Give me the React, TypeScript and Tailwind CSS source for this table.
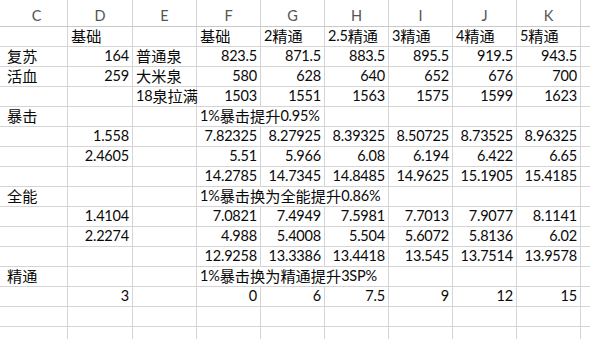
import React from "react";

type Cell = { t?: string; a?: "l" | "r"; span?: number };

const colW = [68, 65, 64, 64, 64, 64, 64, 64, 64, 9];

const wClass: Record<number, string> = {
  68: "w-[68px]",
  65: "w-[65px]",
  64: "w-[64px]",
  128: "w-[128px]",
  192: "w-[192px]",
  9: "w-[9px]",
};

const L = (t: string, span = 1): Cell => ({ t, a: "l", span });
const R = (t: string): Cell => ({ t, a: "r" });
const E: Cell = {};

const nums = (arr: string[]) => arr.map((x) => R(x));

const rows: Cell[][] = [
  [E, L("基础"), E, L("基础"), L("2精通"), L("2.5精通"), L("3精通"), L("4精通"), L("5精通"), E],
  [L("复苏"), R("164"), L("普通泉"), ...nums(["823.5", "871.5", "883.5", "895.5", "919.5", "943.5"]), E],
  [L("活血"), R("259"), L("大米泉"), ...nums(["580", "628", "640", "652", "676", "700"]), E],
  [E, E, L("18泉拉满"), ...nums(["1503", "1551", "1563", "1575", "1599", "1623"]), E],
  [L("暴击"), E, E, L("1%暴击提升0.95%", 2), E, E, E, E, E],
  [E, R("1.558"), E, ...nums(["7.82325", "8.27925", "8.39325", "8.50725", "8.73525", "8.96325"]), E],
  [E, R("2.4605"), E, ...nums(["5.51", "5.966", "6.08", "6.194", "6.422", "6.65"]), E],
  [E, E, E, ...nums(["14.2785", "14.7345", "14.8485", "14.9625", "15.1905", "15.4185"]), E],
  [L("全能"), E, E, L("1%暴击换为全能提升0.86%", 3), E, E, E, E],
  [E, R("1.4104"), E, ...nums(["7.0821", "7.4949", "7.5981", "7.7013", "7.9077", "8.1141"]), E],
  [E, R("2.2274"), E, ...nums(["4.988", "5.4008", "5.504", "5.6072", "5.8136", "6.02"]), E],
  [E, E, E, ...nums(["12.9258", "13.3386", "13.4418", "13.545", "13.7514", "13.9578"]), E],
  [L("精通"), E, E, L("1%暴击换为精通提升3SP%", 3), E, E, E, E],
  [E, R("3"), E, ...nums(["0", "6", "7.5", "9", "12", "15"]), E],
  [E, E, E, E, E, E, E, E, E, E],
  [E, E, E, E, E, E, E, E, E, E],
];

const headers = ["C", "D", "E", "F", "G", "H", "I", "J", "K", ""];

function Txt({ t }: { t: string }) {
  const parts = t.match(/([\u4e00-\u9fff]+|[^\u4e00-\u9fff]+)/g) ?? [];
  return (
    <>
      {parts.map((p, i) =>
        /[\u4e00-\u9fff]/.test(p) ? (
          <span key={i} className="text-[15.2px]">
            {p}
          </span>
        ) : (
          <span key={i} className="tracking-[-0.2px]">{p}</span>
        )
      )}
    </>
  );
}

export default function App() {
  return (
    <div className="w-[590px] h-[339px] overflow-hidden bg-white text-[14.5px] text-[#0a0a0a] font-['Lato','Noto_Sans_CJK_SC',sans-serif]">
      <div className="flex h-[27px]">
        {headers.map((h, i) => (
          <div
            key={i}
            className={`shrink-0 h-[27px] ${wClass[colW[i]]} border-b border-[#c8c8c8] ${
              i < 9 ? "border-r border-r-[#d4d4d4]" : ""
            } flex items-end justify-center pb-[3px] leading-none text-[#555] ${i === 0 ? "pl-[6px]" : ""}`}
          >
            {h}
          </div>
        ))}
      </div>
      {rows.map((row, ri) => {
        let col = 0;
        return (
          <div key={ri} className="flex h-[20px]">
            {row.map((c, ci) => {
              const span = c.span ?? 1;
              let w = 0;
              for (let k = 0; k < span; k++) w += colW[col + k] ?? 0;
              const isLast = col + span - 1 >= 9;
              col += span;
              if (w === 0) return null;
              return (
                <div
                  key={ci}
                  className={`shrink-0 h-[20px] ${wClass[w]} border-b border-[#d4d4d4] ${
                    isLast ? "" : "border-r"
                  } flex items-center whitespace-nowrap leading-none ${
                    c.a === "r" ? "justify-end pr-[3px]" : "justify-start pl-[3px]"
                  } ${ci === 0 ? "pl-[7px]" : ""}`}
                >
                  {c.t ? <Txt t={c.t} /> : null}
                </div>
              );
            })}
          </div>
        );
      })}
    </div>
  );
}
